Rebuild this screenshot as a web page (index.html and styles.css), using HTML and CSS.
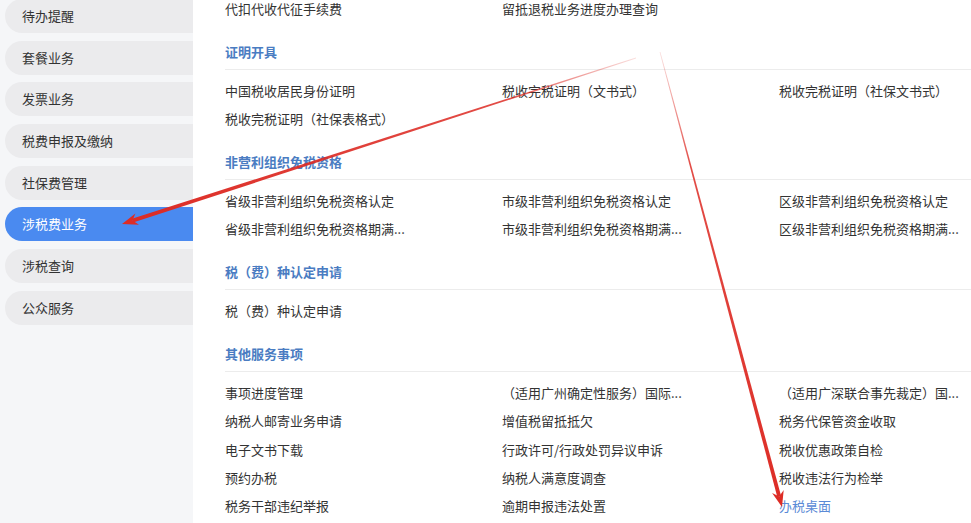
FILE: index.html
```html
<!DOCTYPE html>
<html lang="zh-CN">
<head>
<meta charset="utf-8">
<title>涉税费业务</title>
<link rel="stylesheet" href="styles.css">
</head>
<body>
<div class="page">
  <aside class="sidebar">
    <ul class="menu">
      <li class="menu-item">待办提醒</li>
      <li class="menu-item">套餐业务</li>
      <li class="menu-item">发票业务</li>
      <li class="menu-item">税费申报及缴纳</li>
      <li class="menu-item">社保费管理</li>
      <li class="menu-item active">涉税费业务</li>
      <li class="menu-item">涉税查询</li>
      <li class="menu-item">公众服务</li>
    </ul>
  </aside>
  <main class="main">
    <div class="content">
      <section class="section partial">
        <div class="grid">
          <a class="link">代扣代收代征手续费</a>
          <a class="link">留抵退税业务进度办理查询</a>
        </div>
      </section>
      <section class="section">
        <h3 class="sec-title">证明开具</h3>
        <div class="grid">
          <a class="link">中国税收居民身份证明</a>
          <a class="link">税收完税证明（文书式）</a>
          <a class="link">税收完税证明（社保文书式）</a>
          <a class="link">税收完税证明（社保表格式）</a>
        </div>
      </section>
      <section class="section">
        <h3 class="sec-title">非营利组织免税资格</h3>
        <div class="grid">
          <a class="link">省级非营利组织免税资格认定</a>
          <a class="link">市级非营利组织免税资格认定</a>
          <a class="link">区级非营利组织免税资格认定</a>
          <a class="link">省级非营利组织免税资格期满...</a>
          <a class="link">市级非营利组织免税资格期满...</a>
          <a class="link">区级非营利组织免税资格期满...</a>
        </div>
      </section>
      <section class="section">
        <h3 class="sec-title">税（费）种认定申请</h3>
        <div class="grid">
          <a class="link">税（费）种认定申请</a>
        </div>
      </section>
      <section class="section">
        <h3 class="sec-title">其他服务事项</h3>
        <div class="grid grid-wide">
          <a class="link">事项进度管理</a>
          <a class="link">（适用广州确定性服务）国际...</a>
          <a class="link">（适用广深联合事先裁定）国...</a>
          <a class="link">纳税人邮寄业务申请</a>
          <a class="link">增值税留抵抵欠</a>
          <a class="link">税务代保管资金收取</a>
          <a class="link">电子文书下载</a>
          <a class="link">行政许可/行政处罚异议申诉</a>
          <a class="link">税收优惠政策自检</a>
          <a class="link">预约办税</a>
          <a class="link">纳税人满意度调查</a>
          <a class="link">税收违法行为检举</a>
          <a class="link">税务干部违纪举报</a>
          <a class="link">逾期申报违法处置</a>
          <a class="link link-blue">办税桌面</a>
        </div>
      </section>
    </div>
  </main>
  <svg class="arrows" width="971" height="523" viewBox="0 0 971 523" aria-hidden="true">
    <defs>
      <linearGradient id="g1" gradientUnits="userSpaceOnUse" x1="636" y1="58" x2="122" y2="224">
        <stop offset="0" stop-color="#dd2c25" stop-opacity="0.15"/>
        <stop offset="0.25" stop-color="#dd2c25" stop-opacity="0.85"/>
        <stop offset="1" stop-color="#dd2c25" stop-opacity="1"/>
      </linearGradient>
      <linearGradient id="g2" gradientUnits="userSpaceOnUse" x1="660" y1="52" x2="782" y2="507">
        <stop offset="0" stop-color="#dd2c25" stop-opacity="0.15"/>
        <stop offset="0.25" stop-color="#dd2c25" stop-opacity="0.85"/>
        <stop offset="1" stop-color="#dd2c25" stop-opacity="1"/>
      </linearGradient>
    </defs>
    <polygon fill="url(#g1)" points="636.1,58.4 635.9,57.6 131.9,218.7 133.1,222.5"/>
    <polygon fill="#dd2c25" points="122,224 139.0,224.8 132.5,220.6 135.4,213.4"/>
    <polygon fill="url(#g2)" points="660.4,51.9 659.6,52.1 777.3,496.9 781.1,495.9"/>
    <polygon fill="#dd2c25" points="782,507 783.7,489.9 779.2,496.4 772.1,493.1"/>
  </svg>
</div>
</body>
</html>
```

FILE: styles.css
```css
* {
  box-sizing: border-box;
}

html, body {
  margin: 0;
  padding: 0;
  background: #ffffff;
}

body {
  font-family: "Noto Sans CJK SC", "Microsoft YaHei", sans-serif;
  font-size: 13px;
  color: #333333;
}

.page {
  position: relative;
  display: flex;
  width: 971px;
  height: 523px;
  overflow: hidden;
}

.sidebar {
  flex: 0 0 193px;
  background: #f5f6f8;
}

.menu {
  list-style: none;
  margin: -1px 0 0 0;
  padding: 0 0 0 5px;
  display: flex;
  flex-direction: column;
  gap: 7.7px;
}

.menu-item {
  height: 34px;
  line-height: 34px;
  padding-left: 17px;
  background: #ebebed;
  border-radius: 17px 0 0 17px;
  color: #333333;
  font-size: 13px;
  white-space: nowrap;
}

.menu-item.active {
  background: #4a8af0;
  color: #ffffff;
}

.main {
  flex: 1;
  padding-left: 32px;
  background: #ffffff;
}

.content {
  margin-top: -5px;
}

.section {
  margin-bottom: 12px;
}

.sec-title {
  margin: 0;
  height: 35px;
  line-height: 34px;
  font-size: 13px;
  font-weight: 700;
  color: #4a7cc2;
  border-bottom: 1px solid #ececec;
}

.grid {
  display: grid;
  grid-template-columns: 277px 277px 277px;
  padding-top: 7px;
}

.section.partial .grid {
  padding-top: 0;
}

.grid-wide {
  grid-auto-rows: 28.3px;
}

.link {
  display: block;
  height: 28px;
  line-height: 28px;
  color: #333333;
  white-space: nowrap;
  text-decoration: none;
}

.grid-wide .link {
  height: 28.3px;
  line-height: 28.3px;
}

.link-blue {
  color: #5b8ad6;
}

.arrows {
  position: absolute;
  left: 0;
  top: 0;
  pointer-events: none;
}
```
